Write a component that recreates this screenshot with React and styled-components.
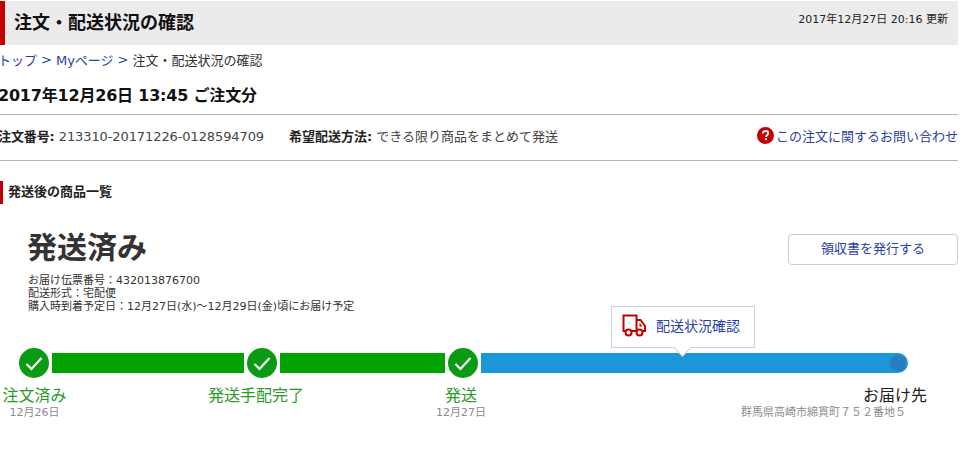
import styled, { createGlobalStyle } from "styled-components";

const GlobalStyle = createGlobalStyle`
  html, body {
    margin: 0;
    padding: 0;
    background: #fff;
    overflow: hidden;
  }
  body {
    font-family: "DejaVu Sans", "Noto Sans CJK JP", sans-serif;
    color: #333;
  }
  a {
    color: #2b3fa8;
    text-decoration: none;
  }
`;

const Page = styled.div`
  width: 958px;
  height: 449px;
  padding-top: 1px;
  box-sizing: border-box;
`;

const Header = styled.header`
  display: flex;
  align-items: center;
  justify-content: space-between;
  height: 44px;
  background: #ebebeb;
  border-left: 5px solid #c40000;
  padding: 0 10px 0 9px;
`;

const Title = styled.h1`
  margin: 0 0 1px;
  font-size: 18px;
  line-height: 24px;
  font-weight: 700;
  color: #111;
`;

const Updated = styled.span`
  font-size: 11px;
  color: #222;
  margin-bottom: 10px;
`;

const Breadcrumb = styled.nav`
  display: flex;
  align-items: center;
  gap: 4px;
  height: 20px;
  margin: 4px 0 0 -2px;
  font-size: 13px;
`;

const Sep = styled.span`
  color: #2b3fa8;
`;

const OrderDate = styled.h2`
  margin: 17px 0 0 -2px;
  font-size: 16px;
  line-height: 20px;
  font-weight: 700;
  letter-spacing: -0.2px;
  color: #111;
`;

const InfoRow = styled.div`
  display: flex;
  align-items: center;
  box-sizing: border-box;
  height: 47px;
  margin-top: 8px;
  padding-bottom: 5px;
  border-top: 1px solid #b5b5b5;
  border-bottom: 1px solid #b5b5b5;
  font-size: 13px;
  color: #444;
`;

const InfoItem = styled.span`
  margin-left: ${(props) => props.$offset}px;
  letter-spacing: ${(props) => (props.$tight ? "-0.1px" : "normal")};
  b {
    color: #222;
  }
`;

const Inquiry = styled.a`
  display: flex;
  align-items: center;
  gap: 2px;
  margin-left: auto;
`;

const SectionTitle = styled.h3`
  display: flex;
  align-items: center;
  height: 23px;
  margin: 20px 0 0;
  padding: 0 0 5px 5px;
  box-sizing: border-box;
  border-left: 3px solid #c40000;
  font-size: 13px;
  font-weight: 700;
  color: #222;
`;

const Shipment = styled.section`
  display: flex;
  justify-content: space-between;
  align-items: flex-start;
  margin-top: 28px;
  padding-left: 28px;
`;

const Status = styled.div`
  margin: -2px 0 0 -1px;
  font-size: 30px;
  line-height: 36px;
  font-weight: 700;
  color: #333;
`;

const Meta = styled.p`
  margin: 8px 0 0;
  font-size: 11px;
  line-height: 13px;
  color: #333;
`;

const ReceiptButton = styled.a`
  display: flex;
  align-items: center;
  justify-content: center;
  box-sizing: border-box;
  width: 170px;
  height: 31px;
  margin-top: 2px;
  padding-bottom: 5px;
  border: 1px solid #c8ccd4;
  border-radius: 4px;
  font-size: 13px;
`;

const Track = styled.div`
  position: relative;
  display: flex;
  align-items: center;
  width: 892px;
  height: 36px;
  margin: 32px 0 0 16px;
`;

const Segment = styled.div`
  height: 20px;
  background: ${(props) => (props.$blue ? "#1a96d9" : "#00a300")};
  width: ${(props) => (props.$width ? `${props.$width}px` : "auto")};
  flex: ${(props) => (props.$blue ? 1 : "none")};
  display: flex;
  align-items: center;
  justify-content: flex-end;
  padding-right: ${(props) => (props.$blue ? "2px" : 0)};
  border-radius: ${(props) => (props.$blue ? "0 10px 10px 0" : 0)};
`;

const EndDot = styled.span`
  width: 16px;
  height: 16px;
  border-radius: 50%;
  background: #2a7bbf;
`;

const Node = styled.span`
  flex: none;
  display: flex;
  align-items: center;
  justify-content: center;
  box-sizing: border-box;
  width: 36px;
  height: 36px;
  border: 3px solid #fff;
  border-radius: 50%;
  background: #0a9a14;
`;

const Popup = styled.a`
  position: absolute;
  left: 595px;
  top: -39px;
  display: flex;
  align-items: center;
  gap: 10px;
  box-sizing: border-box;
  width: 144px;
  height: 42px;
  padding: 0 0 4px 10px;
  background: #fff;
  border: 1px solid #ccd0d6;
  font-size: 14px;
  &::after {
    content: "";
    position: absolute;
    left: 64px;
    bottom: -7px;
    width: 12px;
    height: 12px;
    background: #fff;
    border-right: 1px solid #ccd0d6;
    border-bottom: 1px solid #ccd0d6;
    transform: rotate(45deg);
  }
`;

const Steps = styled.div`
  display: flex;
  align-items: flex-start;
  margin-top: 6px;
  padding-left: 2px;
`;

const Step = styled.div`
  flex: none;
  width: ${(props) => props.$width}px;
  margin-left: ${(props) => props.$offset}px;
  text-align: center;
  white-space: nowrap;
`;

const StepName = styled.div`
  font-size: 16px;
  line-height: 18px;
  color: #2c9a1f;
`;

const StepDate = styled.div`
  margin-top: 1px;
  font-size: 11px;
  line-height: 14px;
  color: #8c8c8c;
`;

const Destination = styled.div`
  margin-left: auto;
  text-align: right;
  white-space: nowrap;
`;

const DestName = styled.div`
  font-size: 16px;
  line-height: 18px;
  color: #222;
  margin-right: 31px;
`;

const DestAddress = styled.div`
  margin: 1px 52px 0 0;
  font-size: 11px;
  line-height: 14px;
  color: #8c8c8c;
`;

const CheckIcon = () => (
  <svg width="18" height="15" viewBox="0 0 18 15" fill="none">
    <path d="M1.5 8L6.5 13L16.5 2" stroke="#fff" strokeWidth="2.2" />
  </svg>
);

const HelpIcon = () => (
  <svg width="17" height="17" viewBox="0 0 17 17">
    <circle cx="8.5" cy="8.5" r="8.5" fill="#c40000" />
    <path
      d="M5.8 6.6C5.8 4.9 7 4 8.6 4C10.2 4 11.3 4.9 11.3 6.3C11.3 8.1 9 8.2 9 10"
      fill="none"
      stroke="#fff"
      strokeWidth="1.9"
    />
    <rect x="8" y="11.2" width="2" height="2" fill="#fff" />
  </svg>
);

const TruckIcon = () => (
  <svg width="24" height="23" viewBox="0 0 24 23" fill="none" stroke="#c40000" strokeWidth="2">
    <path d="M4 17H1.5V1.5H14.5V17H9" />
    <path d="M14.5 6H18.5L23 12V17H20.5" />
    <path d="M14.5 17H15" />
    <path d="M17.5 8.5V12.5H20.5Z" fill="#c40000" stroke="none" />
    <circle cx="6.5" cy="18.5" r="3" />
    <circle cx="17.5" cy="18.5" r="3" />
  </svg>
);

const steps = [
  { name: "注文済み", date: "12月26日", width: 65, offset: 0 },
  { name: "発送手配完了", width: 96, offset: 141 },
  { name: "発送", date: "12月27日", width: 50, offset: 132 },
];

const App = () => {
  return (
    <Page>
      <GlobalStyle />
      <Header>
        <Title>注文・配送状況の確認</Title>
        <Updated>2017年12月27日 20:16 更新</Updated>
      </Header>
      <Breadcrumb>
        <a href="#top">トップ</a>
        <Sep>&gt;</Sep>
        <a href="#my">Myページ</a>
        <Sep>&gt;</Sep>
        <span>注文・配送状況の確認</span>
      </Breadcrumb>
      <OrderDate>2017年12月26日 13:45 ご注文分</OrderDate>
      <InfoRow>
        <InfoItem $offset={-2} $tight>
          <b>注文番号:</b> 213310-20171226-0128594709
        </InfoItem>
        <InfoItem $offset={25}>
          <b>希望配送方法:</b> できる限り商品をまとめて発送
        </InfoItem>
        <Inquiry href="#inquiry">
          <HelpIcon />
          この注文に関するお問い合わせ
        </Inquiry>
      </InfoRow>
      <SectionTitle>発送後の商品一覧</SectionTitle>
      <Shipment>
        <div>
          <Status>発送済み</Status>
          <Meta>
            お届け伝票番号：432013876700
            <br />
            配送形式：宅配便
            <br />
            購入時到着予定日：12月27日(水)～12月29日(金)頃にお届け予定
          </Meta>
        </div>
        <ReceiptButton href="#receipt">領収書を発行する</ReceiptButton>
      </Shipment>
      <Track>
        <Node>
          <CheckIcon />
        </Node>
        <Segment $width={192} />
        <Node>
          <CheckIcon />
        </Node>
        <Segment $width={165} />
        <Node>
          <CheckIcon />
        </Node>
        <Segment $blue>
          <EndDot />
        </Segment>
        <Popup href="#tracking">
          <TruckIcon />
          配送状況確認
        </Popup>
      </Track>
      <Steps>
        {steps.map((step) => (
          <Step key={step.name} $width={step.width} $offset={step.offset}>
            <StepName>{step.name}</StepName>
            {step.date && <StepDate>{step.date}</StepDate>}
          </Step>
        ))}
        <Destination>
          <DestName>お届け先</DestName>
          <DestAddress>群馬県高崎市綿貫町７５２番地５</DestAddress>
        </Destination>
      </Steps>
    </Page>
  );
};

export default App;
